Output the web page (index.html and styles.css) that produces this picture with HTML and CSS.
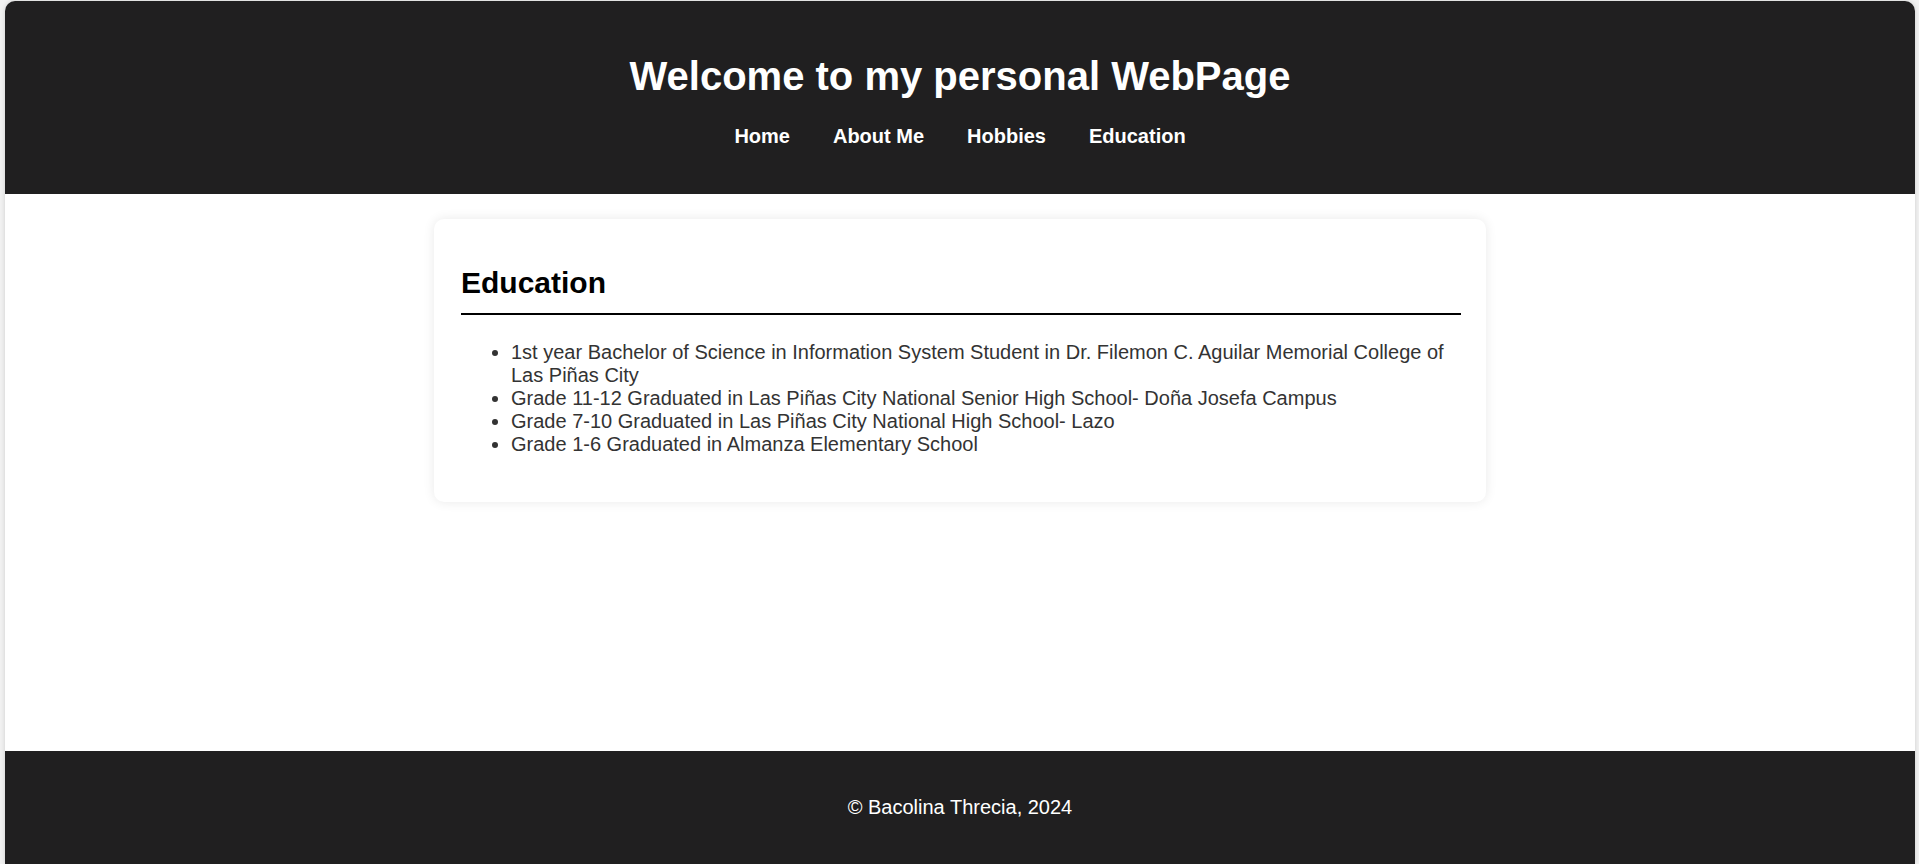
FILE: index.html
```html
<!DOCTYPE html>
<html lang="en">
<head>
<meta charset="utf-8">
<title>Education</title>
<link rel="stylesheet" href="styles.css">
</head>
<body>
<div class="page">
  <header class="site-header">
    <h1 class="site-title">Welcome to my personal WebPage</h1>
    <nav class="site-nav">
      <ul class="nav-list">
        <li><a class="nav-link" href="#">Home</a></li>
        <li><a class="nav-link" href="#">About Me</a></li>
        <li><a class="nav-link" href="#">Hobbies</a></li>
        <li><a class="nav-link" href="#">Education</a></li>
      </ul>
    </nav>
  </header>
  <main class="site-main">
    <section class="card">
      <h2 class="card-title">Education</h2>
      <ul class="edu-list">
        <li>1st year Bachelor of Science in Information System Student in Dr. Filemon C. Aguilar Memorial College of Las Piñas City</li>
        <li>Grade 11-12 Graduated in Las Piñas City National Senior High School- Doña Josefa Campus</li>
        <li>Grade 7-10 Graduated in Las Piñas City National High School- Lazo</li>
        <li>Grade 1-6 Graduated in Almanza Elementary School</li>
      </ul>
    </section>
  </main>
  <footer class="site-footer">
    <p class="footer-text">© Bacolina Threcia, 2024</p>
  </footer>
</div>
</body>
</html>
```
FILE: styles.css
```css
* {
  box-sizing: border-box;
}

html, body {
  margin: 0;
}

body {
  background: #f2f2f2;
  font-family: "Liberation Sans", Arial, sans-serif;
  font-size: 20px;
  color: #333;
  padding: 1px 4px 0 5px;
  min-height: 100vh;
  display: flex;
  flex-direction: column;
}

.page {
  flex: 1;
  display: flex;
  flex-direction: column;
  background: #fff;
  border-radius: 10px 10px 0 0;
  box-shadow: 0 0 5px rgba(0, 0, 0, 0.15);
  overflow: hidden;
}

.site-header {
  background: #201f20;
  color: #fff;
  text-align: center;
  padding: 25px 25px 20px;
}

.site-title {
  font-size: 40px;
  font-weight: bold;
  margin: 26.8px 0 26.3px;
  line-height: 46px;
}

.site-nav {
  padding-bottom: 25.5px;
}

.nav-list {
  list-style: none;
  margin: 0;
  padding: 0;
  display: flex;
  justify-content: center;
  gap: 43px;
  line-height: 23px;
}

.nav-link {
  color: #fff;
  text-decoration: none;
  font-weight: bold;
  font-size: 20px;
}

.site-main {
  flex: 1;
  padding: 25px 0;
}

.card {
  width: 1052px;
  margin: 0 auto;
  background: #fff;
  border-radius: 10px;
  box-shadow: 0 0 12px rgba(0, 0, 0, 0.09);
  padding: 25px 25px 25.5px 27px;
}

.card-title {
  font-size: 30px;
  color: #000;
  margin: 22.5px 0 26px;
  line-height: 34.5px;
  padding-bottom: 12.5px;
  border-bottom: 2px solid #000;
}

.edu-list {
  margin: 0 0 20px;
  padding-left: 50px;
  line-height: 23px;
  color: #333;
}

.site-footer {
  background: #201f20;
  color: #fff;
  text-align: center;
  padding: 25px;
}

.footer-text {
  margin: 20px 0;
  line-height: 23px;
}
```
